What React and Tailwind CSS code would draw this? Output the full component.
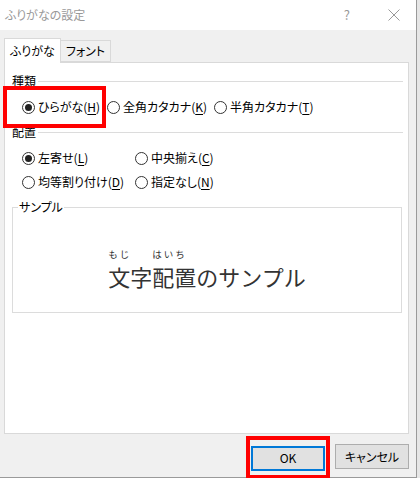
import React from 'react';

const font = "font-['Noto_Sans_CJK_JP',sans-serif] [font-feature-settings:'palt']";

const Radio = ({ checked, label, keyChar, className = '' }) => (
  <label className={`flex items-center h-[20px] ${className}`}>
    <span className="w-[13px] h-[13px] rounded-full border border-[#333] bg-white flex items-center justify-center shrink-0">
      {checked && <span className="w-[7px] h-[7px] rounded-full bg-[#222]" />}
    </span>
    <span className="ml-[3px] text-[12px] leading-none text-black whitespace-nowrap">
      {label}(<span className="underline underline-offset-2">{keyChar}</span>)
    </span>
  </label>
);

const GroupHeader = ({ title }) => (
  <div className="flex items-center h-[14px]">
    <span className="text-[12px] leading-none text-black">{title}</span>
    <div className="flex-1 ml-[2px] h-px bg-[#dcdcdc]" />
  </div>
);

export default function App() {
  return (
    <div className={`w-[420px] h-[478px] flex bg-[#e6e6e6] overflow-hidden ${font}`}>
      <div className="w-[417px] h-[478px] flex flex-col bg-[#f0f0f0] border-r border-b border-[#9a9a9a]">
        {/* title bar */}
        <div className="h-[30px] bg-white flex items-center shrink-0">
          <span className="ml-[5px] text-[12px] text-[#999]">ふりがなの設定</span>
          <span className="ml-auto mr-[38px] text-[13px] text-[#999]">?</span>
          <svg className="mr-[16px]" width="12" height="12" viewBox="0 0 12 12">
            <path d="M0.5 0.5L11.5 11.5M11.5 0.5L0.5 11.5" stroke="#999" strokeWidth="1" fill="none" />
          </svg>
        </div>

        {/* tabs */}
        <div className="flex items-end ml-[4px] mt-[7px] h-[25px]">
          <div className="h-[25px] w-[57px] bg-white border border-b-0 border-[#d9d9d9] flex items-center justify-center text-[12px] text-black relative z-10 -mb-px">
            ふりがな
          </div>
          <div className="h-[22px] w-[50px] bg-[#f0f0f0] border border-l-0 border-[#d9d9d9] flex items-center justify-center text-[12px] text-black">
            フォント
          </div>
        </div>

        {/* panel */}
        <div className="ml-[4px] w-[405px] h-[372px] bg-white border border-[#d9d9d9] pl-[7px] pr-[5px] flex flex-col">
          <div className="mt-[11px]">
            <GroupHeader title="種類" />
          </div>
          <div className="relative mt-[9px] flex pl-[10px]">
            <div className="absolute left-[-9px] top-[-11px] w-[103px] h-[42px] border-4 border-[#ff0000]" />
            <Radio checked label="ひらがな" keyChar="H" className="w-[85px]" />
            <Radio label="全角カタカナ" keyChar="K" className="w-[107px]" />
            <Radio label="半角カタカナ" keyChar="T" />
          </div>

          <div className="mt-[8px]">
            <GroupHeader title="配置" />
          </div>
          <div className="mt-[9px] flex flex-col gap-[4px] pl-[10px]">
            <div className="flex">
              <Radio checked label="左寄せ" keyChar="L" className="w-[113px]" />
              <Radio label="中央揃え" keyChar="C" />
            </div>
            <div className="flex">
              <Radio label="均等割り付け" keyChar="D" className="w-[113px]" />
              <Radio label="指定なし" keyChar="N" />
            </div>
          </div>

          <fieldset className="mt-[8px] w-[390px] h-[113px] border border-[#dcdcdc] flex flex-col items-center">
            <legend className="ml-[5px] px-px text-[12px] leading-[14px] text-black">サンプル</legend>
            <div className="mt-[35px] flex items-end text-[#333] [font-feature-settings:normal]">
              <div className="flex flex-col items-start">
                <span className="text-[9.5px] leading-[11px] tracking-[2px] mb-[4px]">もじ</span>
                <span className="text-[22px] leading-[24px]">文字</span>
              </div>
              <div className="flex flex-col items-start">
                <span className="text-[9.5px] leading-[11px] tracking-[2px] mb-[4px]">はいち</span>
                <span className="text-[22px] leading-[24px]">配置</span>
              </div>
              <span className="text-[22px] leading-[24px]">のサンプル</span>
            </div>
          </fieldset>
        </div>

        {/* buttons */}
        <div className="flex justify-end mt-[10px] mr-[7px] gap-[10px]">
          <div className="relative">
            <div className="absolute left-[-5px] right-[-5px] top-[-8px] bottom-[-8px] border-4 border-[#ff0000]" />
            <button className="w-[74px] h-[25px] bg-[#e1e1e1] border-2 border-[#0078d7] text-[12px] text-black">
              OK
            </button>
          </div>
          <button className="w-[74px] h-[25px] bg-[#e1e1e1] border border-[#adadad] text-[12px] text-black">
            キャンセル
          </button>
        </div>
      </div>
    </div>
  );
}
